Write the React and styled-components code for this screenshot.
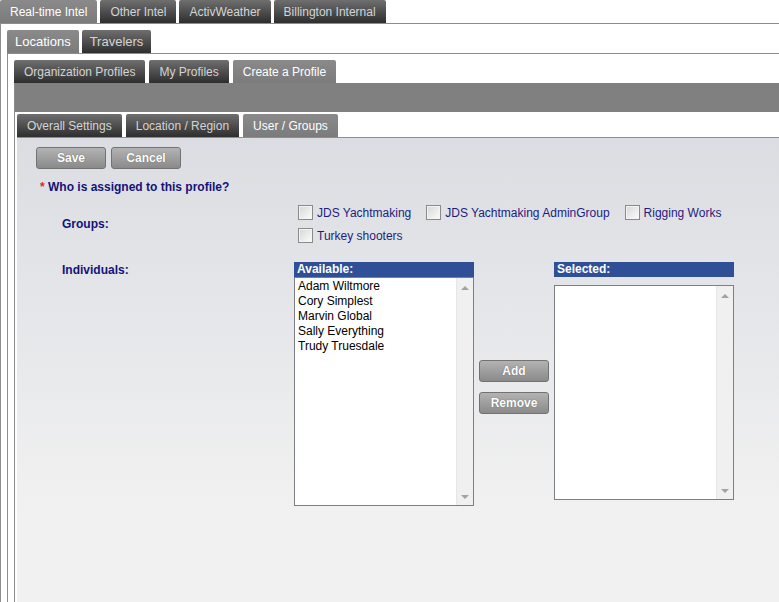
import React from 'react'
import styled, { createGlobalStyle } from 'styled-components';

const GlobalStyle = createGlobalStyle`
  html, body {
    margin: 0;
    padding: 0;
    height: 100%;
    overflow: hidden;
    background: #fff;
    font-family: "Liberation Sans", Arial, sans-serif;
  }
  #root { height: 100%; }
`;

const mainTabs = ['Real-time Intel', 'Other Intel', 'ActivWeather', 'Billington Internal'];
const subTabs = ['Locations', 'Travelers'];
const profileTabs = ['Organization Profiles', 'My Profiles', 'Create a Profile'];
const settingTabs = ['Overall Settings', 'Location / Region', 'User / Groups'];
const groups = ['JDS Yachtmaking', 'JDS Yachtmaking AdminGroup', 'Rigging Works', 'Turkey shooters'];
const people = ['Adam Wiltmore', 'Cory Simplest', 'Marvin Global', 'Sally Everything', 'Trudy Truesdale'];

const Tabs = ({ items, active, size, gap, pad, line }) => (
  <TabBar $gap={gap} $line={line}>
    {items.map((t) => (
      <Tab key={t} $active={t === active} $size={size} $pad={pad}>{t}</Tab>
    ))}
  </TabBar>
);

const ListBox = ({ title, items, offset, height }) => (
  <ListColumn>
    <ListHeader>{title}</ListHeader>
    <ListFrame $offset={offset} $height={height}>
      <ListItems>
        {items.map((p) => <ListItem key={p}>{p}</ListItem>)}
      </ListItems>
      <Scroll>
        <Arrow />
        <Arrow $down />
      </Scroll>
    </ListFrame>
  </ListColumn>
);

const App = () => {
  return (
    <Page>
      <GlobalStyle />
      <Tabs items={mainTabs} active="Real-time Intel" gap={3} pad={10} line />
      <Panel $pad={6}>
        <Tabs items={subTabs} active="Locations" size={13} gap={3} pad={8} line />
        <Panel $pad={6}>
          <Tabs items={profileTabs} active="Create a Profile" gap={4} pad={10} />
          <InnerPanel>
            <GrayBar />
            <Tabs items={settingTabs} active="User / Groups" gap={4} pad={10} line />
            <Body>
              <ButtonRow>
                <Button>Save</Button>
                <Button>Cancel</Button>
              </ButtonRow>
              <Question><Star>*</Star> Who is assigned to this profile?</Question>
              <Form>
                <FieldLabel $center>Groups:</FieldLabel>
                <Checks>
                  {groups.map((g) => (
                    <CheckItem key={g}>
                      <Box type="checkbox" />
                      {g}
                    </CheckItem>
                  ))}
                </Checks>
                <FieldLabel>Individuals:</FieldLabel>
                <Picker>
                  <ListBox title="Available:" items={people} offset={1} height={229} />
                  <MoveButtons>
                    <Button>Add</Button>
                    <Button>Remove</Button>
                  </MoveButtons>
                  <ListBox title="Selected:" items={[]} offset={9} height={215} />
                </Picker>
              </Form>
            </Body>
          </InnerPanel>
        </Panel>
      </Panel>
    </Page>
  )
}

export default App


const Page = styled.div`
  height: 100%;
  display: flex;
  flex-direction: column;
`;

const TabBar = styled.div`
  display: flex;
  gap: ${(p) => p.$gap}px;
  height: 23px;
  border-bottom: ${(p) => (p.$line ? '1px solid #8d8d8d' : 'none')};
  flex-shrink: 0;
`;

const Tab = styled.div`
  height: 23px;
  padding: 0 ${(p) => p.$pad}px;
  display: flex;
  align-items: center;
  font-size: ${(p) => p.$size || 12}px;
  white-space: nowrap;
  border-radius: 2px 2px 0 0;
  color: ${(p) => (p.$active ? '#ffffff' : '#d4d4d4')};
  background: ${(p) =>
    p.$active
      ? 'linear-gradient(#8a8a8a, #7b7b7b)'
      : 'linear-gradient(#6f6f6f, #2e2e2e)'};
`;

const Panel = styled.div`
  flex: 1;
  display: flex;
  flex-direction: column;
  border-left: 1px solid #8d8d8d;
  padding: ${(p) => p.$pad}px 0 0 ${(p) => p.$pad}px;
  min-height: 0;
`;

const InnerPanel = styled.div`
  flex: 1;
  display: flex;
  flex-direction: column;
  border-left: 1px solid #8d8d8d;
  padding-left: 2px;
`;

const GrayBar = styled.div`
  height: 29px;
  margin-left: -2px;
  margin-bottom: 2px;
  background: #808080;
  flex-shrink: 0;
`;

const Body = styled.div`
  flex: 1;
  background: linear-gradient(#dbdde2, #f1f1f1 80%);
  padding: 9px 0 0 19px;
`;

const ButtonRow = styled.div`
  display: flex;
  gap: 5px;
`;

const Button = styled.div`
  width: 68px;
  height: 20px;
  border: 1px solid #727272;
  border-radius: 3px;
  background: linear-gradient(#b3b3b3, #8a8a8a);
  color: #fff;
  font-size: 12px;
  font-weight: bold;
  display: flex;
  align-items: center;
  justify-content: center;
  text-shadow: 0 0 1px #555;
`;

const Question = styled.div`
  margin: 11px 0 0 4px;
  font-size: 12px;
  line-height: 14px;
  font-weight: bold;
  color: #13137a;
`;

const Star = styled.span`
  color: #e3261b;
`;

const Form = styled.div`
  display: grid;
  grid-template-columns: 232px 1fr;
  row-gap: 15px;
  margin: 7px 0 0 26px;
`;

const FieldLabel = styled.div`
  font-size: 12px;
  line-height: 14px;
  font-weight: bold;
  color: #13137a;
  align-self: ${(p) => (p.$center ? 'center' : 'start')};
  padding-top: ${(p) => (p.$center ? 0 : 1)}px;
`;

const Checks = styled.div`
  display: flex;
  flex-wrap: wrap;
  width: 445px;
  column-gap: 15px;
  padding-left: 4px;
`;

const CheckItem = styled.label`
  height: 23px;
  display: flex;
  align-items: center;
  gap: 4px;
  font-size: 12px;
  color: #1d1d80;
  white-space: nowrap;
`;

const Box = styled.input`
  appearance: none;
  margin: 0;
  width: 15px;
  height: 15px;
  border: 1px solid #8a8a8a;
  background: linear-gradient(135deg, #d6d6d6, #fdfdfd);
  box-shadow: inset 0 0 0 1px #f4f4f4;
`;

const Picker = styled.div`
  display: flex;
  gap: 5px;
`;

const ListColumn = styled.div`
  width: 180px;
  display: flex;
  flex-direction: column;
`;

const ListHeader = styled.div`
  height: 15px;
  background: #2f4f97;
  color: #fff;
  font-size: 12px;
  font-weight: bold;
  line-height: 15px;
  padding-left: 3px;
`;

const ListFrame = styled.div`
  margin-top: ${(p) => p.$offset - 1}px;
  height: ${(p) => p.$height - 2}px;
  border: 1px solid #7c7f86;
  background: #fff;
  display: flex;
`;

const ListItems = styled.div`
  flex: 1;
  padding: 1px 3px;
`;

const ListItem = styled.div`
  font-size: 12px;
  line-height: 15px;
  color: #000;
`;

const Scroll = styled.div`
  width: 16px;
  background: #f0f0f0;
  border-left: 1px solid #e6e6e6;
  display: flex;
  flex-direction: column;
  justify-content: space-between;
  align-items: center;
  padding: 8px 0 6px;
`;

const Arrow = styled.div`
  width: 0;
  height: 0;
  border-left: 4px solid transparent;
  border-right: 4px solid transparent;
  ${(p) => (p.$down ? 'border-top: 4px solid #a2a2a2;' : 'border-bottom: 4px solid #a2a2a2;')}
`;

const MoveButtons = styled.div`
  display: flex;
  flex-direction: column;
  gap: 10px;
  padding-top: 98px;
`;
